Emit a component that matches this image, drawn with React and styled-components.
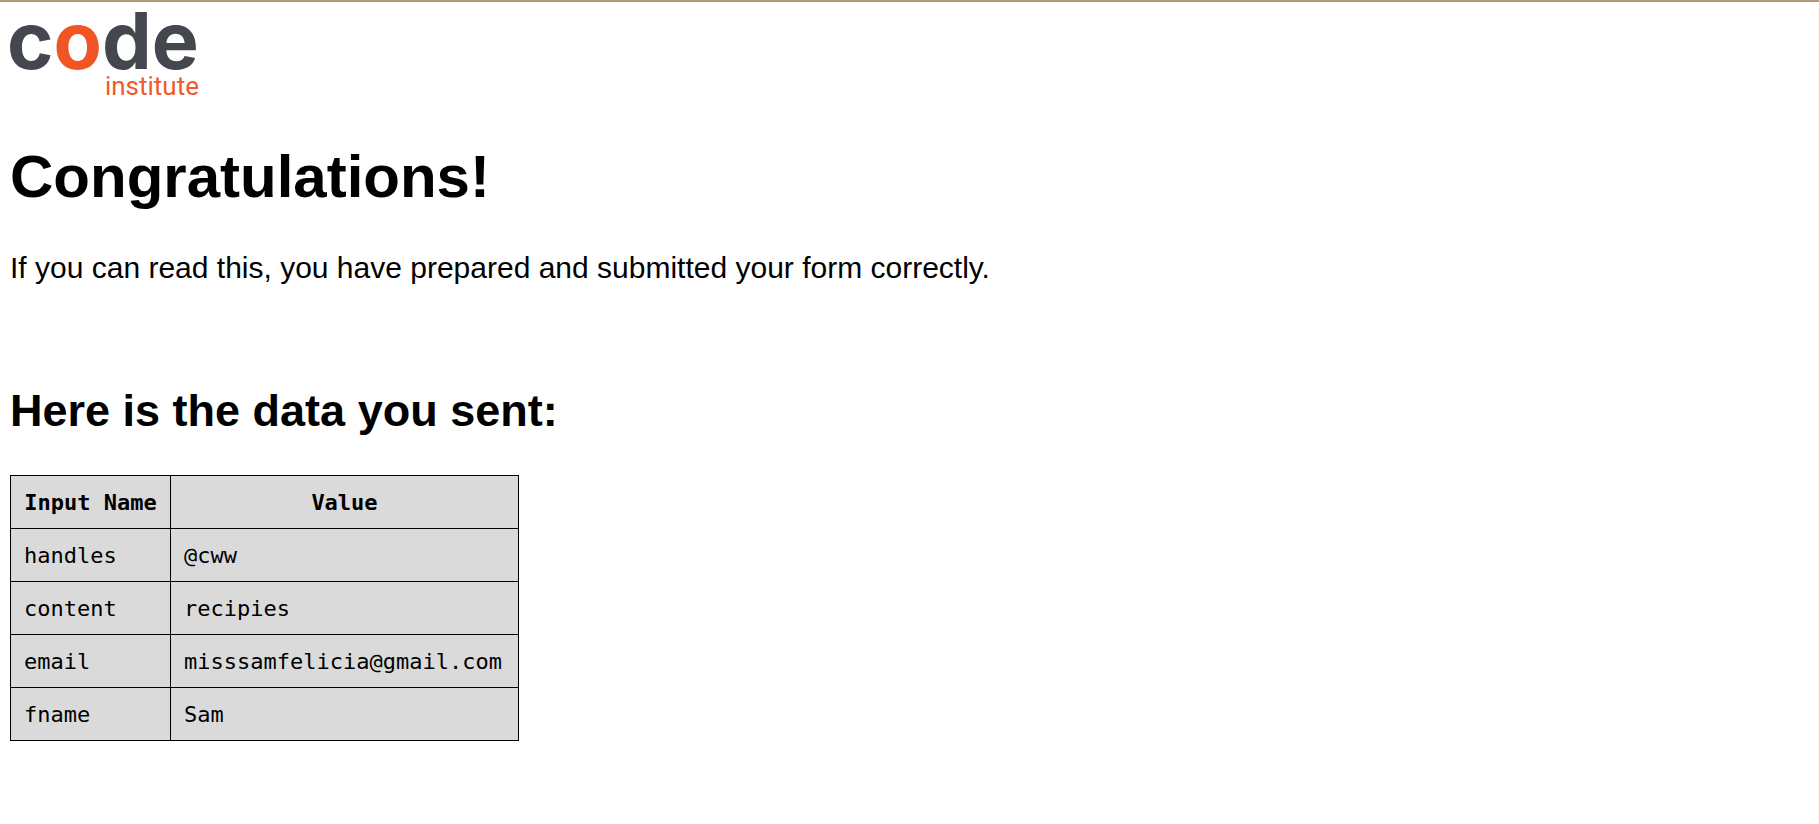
import React from "react";
import styled, { createGlobalStyle } from "styled-components";

const GlobalStyle = createGlobalStyle`
  body {
    margin: 0;
    background: #ffffff;
    color: #000000;
    font-family: "Liberation Sans", Arial, sans-serif;
    font-size: 30px;
  }
`;

const Page = styled.main`
  border-top: 2px solid #b49b78;
  padding: 10px;
`;

const Logo = styled.svg`
  display: block;
  width: 190px;
  height: 88px;
  overflow: visible;
`;

const LogoWord = styled.text`
  font-family: Inter, sans-serif;
  font-size: 79px;
  font-weight: 700;
  fill: #45474f;
`;

const LogoAccent = styled.tspan`
  fill: #f15523;
`;

const LogoTagline = styled.text`
  font-family: Roboto, sans-serif;
  font-size: 26px;
  fill: #f15a2b;
`;

const Title = styled.h1`
  margin: 42px 0 40px;
  font-size: 60px;
  line-height: 69px;
`;

const Message = styled.p`
  margin: 0 0 100px;
  line-height: 34px;
`;

const Subtitle = styled.h2`
  margin: 0 0 38px;
  font-size: 45px;
  line-height: 52px;
`;

const DataTable = styled.table`
  border-collapse: collapse;
  background: #dadada;
  font-family: Consolas, "DejaVu Sans Mono", monospace;
  font-size: 22px;
  line-height: 26px;
`;

const Column = styled.col`
  width: ${({ $width }) => $width}px;
`;

const HeaderCell = styled.th`
  border: 1px solid #000000;
  padding: 14px 13px 12px;
  white-space: nowrap;
`;

const Cell = styled.td`
  border: 1px solid #000000;
  padding: 14px 13px 12px;
`;

const entries = [
  ["handles", "@cww"],
  ["content", "recipies"],
  ["email", "misssamfelicia@gmail.com"],
  ["fname", "Sam"],
];

function CodeInstituteLogo() {
  return (
    <Logo viewBox="0 0 190 88" role="img" aria-label="Code Institute">
      <LogoWord x="-3" y="57">
        c<LogoAccent>o</LogoAccent>de
      </LogoWord>
      <LogoTagline x="189" y="83" textAnchor="end">
        institute
      </LogoTagline>
    </Logo>
  );
}

export default function App() {
  return (
    <>
      <GlobalStyle />
      <Page>
        <CodeInstituteLogo />
        <Title>Congratulations!</Title>
        <Message>
          If you can read this, you have prepared and submitted your form
          correctly.
        </Message>
        <Subtitle>Here is the data you sent:</Subtitle>
        <DataTable>
          <colgroup>
            <Column $width={160} />
            <Column $width={348} />
          </colgroup>
          <thead>
            <tr>
              <HeaderCell scope="col">Input Name</HeaderCell>
              <HeaderCell scope="col">Value</HeaderCell>
            </tr>
          </thead>
          <tbody>
            {entries.map(([name, value]) => (
              <tr key={name}>
                <Cell>{name}</Cell>
                <Cell>{value}</Cell>
              </tr>
            ))}
          </tbody>
        </DataTable>
      </Page>
    </>
  );
}
